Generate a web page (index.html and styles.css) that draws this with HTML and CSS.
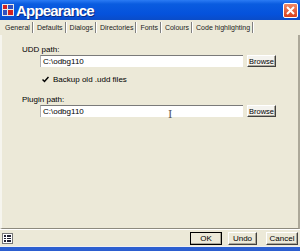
FILE: index.html
```html
<!DOCTYPE html>
<html lang="en">
<head>
  <meta charset="UTF-8" />
  <title>Appearance</title>
  <link rel="stylesheet" href="styles.css">
</head>
<body>
  <div class="window">
    <div class="titlebar">
      <svg class="app-icon" width="12" height="12" viewBox="0 0 12 12">
        <rect x="0" y="0" width="12" height="12" fill="#e8e8e8"/>
        <rect x="1" y="1" width="4" height="4" fill="#d02020"/>
        <rect x="6" y="1" width="5" height="4" fill="#3050c0"/>
        <rect x="1" y="6" width="4" height="5" fill="#3050c0"/>
        <rect x="6" y="6" width="5" height="5" fill="#d02020"/>
      </svg>
      <span class="title">Appearance</span>
      <div class="close-btn">
        <svg width="9" height="9" viewBox="0 0 9 9">
          <path d="M1 1 L8 8 M8 1 L1 8" stroke="#fff" stroke-width="2"/>
        </svg>
      </div>
    </div>
    <div class="tabs">
      <span class="tab">General</span>
      <span class="tab">Defaults</span>
      <span class="tab">Dialogs</span>
      <span class="tab active">Directories</span>
      <span class="tab">Fonts</span>
      <span class="tab">Colours</span>
      <span class="tab">Code highlighting</span>
    </div>
    <div class="panel">
      <div class="label">UDD path:</div>
      <div class="path-row">
        <div class="field">C:\odbg110</div>
        <button class="btn-small">Browse</button>
      </div>
      <div class="check-row">
        <span class="checkbox">
          <svg width="7" height="7" viewBox="0 0 7 7">
            <path d="M0.5 3.5 L2.5 5.5 L6.5 1" stroke="#000" stroke-width="1.5" fill="none"/>
          </svg>
        </span>
        <span>Backup old .udd files</span>
      </div>
      <div class="label plugin">Plugin path:</div>
      <div class="path-row">
        <div class="field">C:\odbg110<span class="ibeam">I</span></div>
        <button class="btn-small">Browse</button>
      </div>
    </div>
    <div class="footer">
      <svg class="list-icon" width="11" height="11" viewBox="0 0 11 11">
        <rect x="0.5" y="0.5" width="10" height="10" fill="#fff" stroke="#777"/>
        <rect x="2" y="2" width="2" height="2" fill="#223"/>
        <rect x="5" y="2" width="4" height="2" fill="#223"/>
        <rect x="2" y="5" width="2" height="1" fill="#223"/>
        <rect x="5" y="5" width="4" height="1" fill="#223"/>
        <rect x="2" y="7" width="2" height="2" fill="#223"/>
        <rect x="5" y="7" width="4" height="2" fill="#223"/>
      </svg>
      <div class="actions">
        <button class="btn ok">OK</button>
        <button class="btn undo">Undo</button>
        <button class="btn cancel">Cancel</button>
      </div>
    </div>
    <div class="taskbar"></div>
  </div>
</body>
</html>
```

FILE: styles.css
```css
html, body {
  margin: 0;
  padding: 0;
}
body {
  font-family: "Liberation Sans", Arial, sans-serif;
  font-size: 8px;
  color: #000;
  background: #ece9d8;
}
.window {
  width: 300px;
  height: 251px;
  display: flex;
  flex-direction: column;
  overflow: hidden;
}
.titlebar {
  height: 20px;
  flex: none;
  display: flex;
  align-items: center;
  padding: 0 2px 0 2px;
  background: linear-gradient(#2b7bf4 0%, #0a5ce0 20%, #0552dc 70%, #0a4cc8 100%);
}
.app-icon { margin-right: 2px; }
.title {
  color: #fff;
  font-weight: bold;
  font-size: 15px;
  letter-spacing: -0.8px;
  flex: 1;
  text-shadow: 1px 1px 0 #0a2a80;
}
.close-btn {
  width: 15px;
  height: 15px;
  border: 1px solid #fff;
  border-radius: 2px;
  background: linear-gradient(#f08a68, #d8401c);
  display: flex;
  align-items: center;
  justify-content: center;
  box-sizing: border-box;
}
.tabs {
  height: 15px;
  flex: none;
  display: flex;
  align-items: center;
  padding-left: 2px;
  background: #ece9d8;
}
.tab {
  font-size: 7px;
  padding: 0 2px 0 3px;
  border-right: 1px solid #808080;
  line-height: 11px;
  color: #222;
  box-shadow: 1px 0 0 #fff;
  margin-right: 1px;
}
.panel {
  flex: 1;
  padding: 10px 0 0 20px;
  border-left: 2px solid #f6f5ee;
  border-right: 2px solid #aca899;
  border-bottom: 1px solid #8d8a7e;
  background: #ece9d8;
}
.label { line-height: 10px; height: 10px; }
.label.plugin { margin-top: 11px; }
.path-row {
  display: flex;
  align-items: center;
  margin: 0 0 0 18px;
  gap: 4px;
}
.field {
  width: 200px;
  height: 11px;
  background: #fff;
  border-top: 1px solid #7a7a7a;
  border-left: 1px solid #b0b0b0;
  line-height: 11px;
  padding-left: 2px;
  position: relative;
}
.ibeam {
  position: absolute;
  left: 127px;
  top: 3px;
  font-family: "DejaVu Serif", serif;
  font-size: 11px;
  color: #555;
}
.btn-small {
  width: 29px;
  height: 12px;
  padding: 0;
  font-family: "Liberation Sans", Arial, sans-serif;
  font-size: 7.5px;
  background: #f4f3ee;
  border: 1px solid #fff;
  border-right-color: #404040;
  border-bottom-color: #404040;
  box-shadow: inset -1px -1px 0 #aca899;
}
.check-row {
  display: flex;
  align-items: center;
  margin: 7px 0 6px 20px;
  gap: 4px;
  height: 10px;
}
.checkbox {
  width: 7px;
  height: 7px;
  display: flex;
}
.footer {
  height: 16px;
  flex: none;
  display: flex;
  align-items: center;
  padding: 0 2px;
  background: #ece9d8;
  border-top: 1px solid #fff;
}
.list-icon { margin-top: 1px; }
.actions {
  margin-left: auto;
  display: flex;
}
.btn {
  width: 32px;
  height: 13px;
  padding: 0;
  font-family: "Liberation Sans", Arial, sans-serif;
  font-size: 8px;
  background: #ece9d8;
  border: 1px solid #fff;
  border-right-color: #404040;
  border-bottom-color: #404040;
  box-shadow: inset -1px -1px 0 #aca899;
}
.btn.ok {
  outline: 1px solid #000;
  outline-offset: -1px;
}
.btn.undo {
  width: 29px;
  margin: 0 9px 0 6px;
}
.taskbar {
  height: 4px;
  flex: none;
  border-top: 1px solid #f0f0f0;
  background: #2c5fd0;
}
```
